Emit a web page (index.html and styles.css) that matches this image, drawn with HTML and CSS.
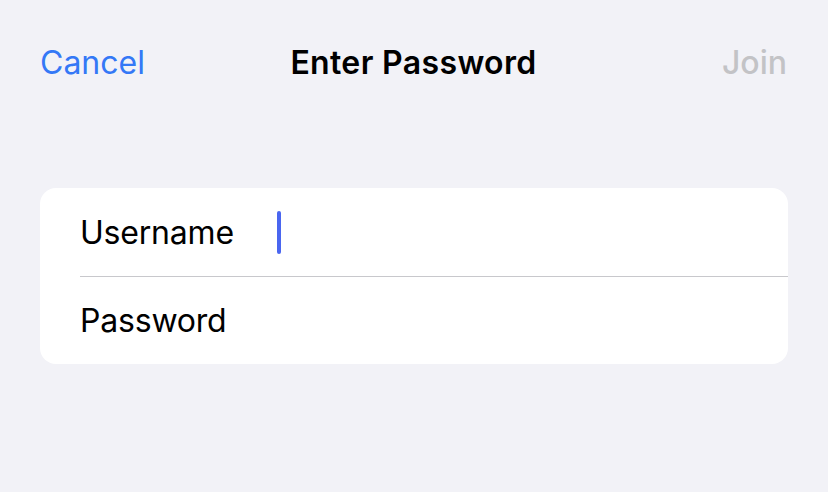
FILE: index.html
```html
<!DOCTYPE html>
<html>
<head>
<meta charset="utf-8">
<link rel="stylesheet" href="styles.css">
</head>
<body>
<div class="screen">
  <header class="nav">
    <span class="nav-btn cancel">Cancel</span>
    <span class="nav-title">Enter Password</span>
    <span class="nav-btn join">Join</span>
  </header>
  <section class="card">
    <div class="row">
      <span class="label">Username</span>
      <span class="field"><span class="cursor"></span></span>
    </div>
    <div class="sep"></div>
    <div class="row row-last">
      <span class="label">Password</span>
      <span class="field"></span>
    </div>
  </section>
</div>
</body>
</html>
```
FILE: styles.css
```css
html, body {
  margin: 0;
  padding: 0;
  background: #f2f2f7;
}
.screen {
  width: 828px;
  height: 492px;
  font-family: Inter, "Noto Sans", sans-serif;
  color: #000;
}
.nav {
  height: 80px;
  margin-top: 22px;
  padding: 0 41px 0 40px;
  display: grid;
  grid-template-columns: 1fr auto 1fr;
  align-items: center;
  font-size: 32px;
}
.nav-btn.cancel {
  color: #3478f6;
  justify-self: start;
}
.nav-btn.join {
  color: #c3c3c6;
  justify-self: end;
  font-weight: 500;
}
.nav-title {
  font-weight: 600;
  letter-spacing: 0.35px;
}
.card {
  margin: 86px 40px 0;
  background: #fff;
  border-radius: 16px;
}
.row {
  height: 88px;
  display: flex;
  align-items: center;
  padding-left: 40px;
  font-size: 32px;
}
.row-last {
  height: 87px;
}
.label {
  width: 197px;
  letter-spacing: -0.2px;
}
.field {
  flex: 1;
  display: flex;
  align-items: center;
}
.cursor {
  display: block;
  width: 4px;
  height: 43px;
  border-radius: 2px;
  background: #4a66f0;
}
.sep {
  height: 1px;
  margin-left: 40px;
  background: #c8c8cc;
}
```
